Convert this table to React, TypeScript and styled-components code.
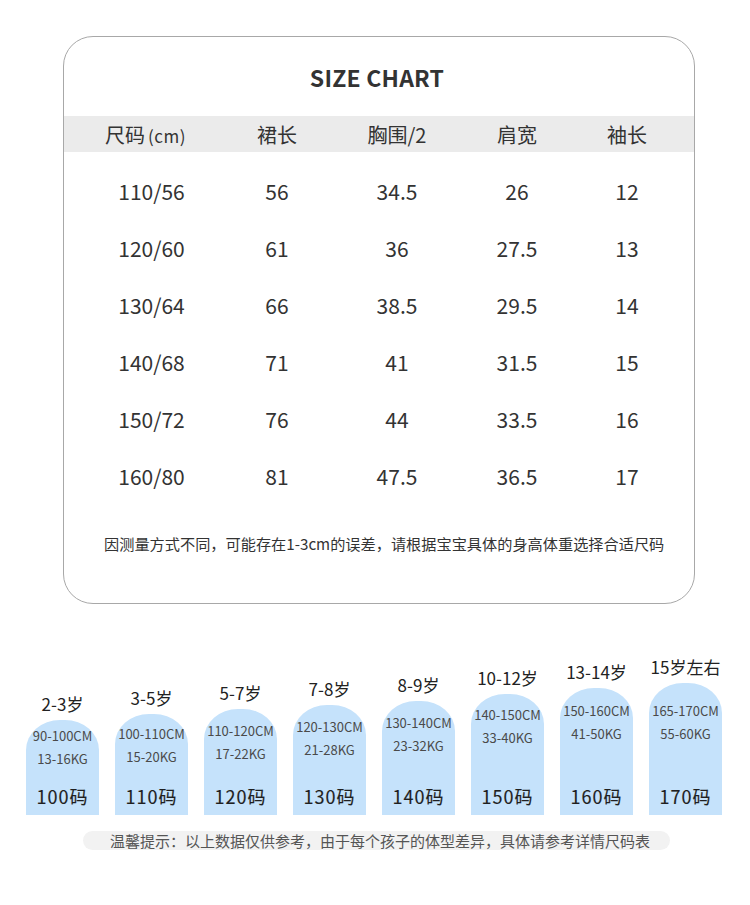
import React from "react";
import styled, { createGlobalStyle } from "styled-components";

const Global = createGlobalStyle`
  html, body { margin: 0; padding: 0; background: #ffffff; }
  body { font-family: "Noto Sans CJK SC", "Noto Sans", sans-serif; color: #333; }
`;

const Page = styled.div`
  width: 750px;
  height: 905px;
  overflow: hidden;
  display: flex;
  flex-direction: column;
`;

const Card = styled.section`
  box-sizing: border-box;
  margin: 36px 0 0 63px;
  width: 632px;
  height: 568px;
  border: 1px solid #a8a8a8;
  border-radius: 30px;
  display: flex;
  flex-direction: column;
`;

const Title = styled.h1`
  margin: 0;
  padding: 24px 4px 0 0;
  height: 54px;
  box-sizing: border-box;
  text-align: center;
  font-size: 23px;
  line-height: 32px;
  font-weight: 700;
  color: #333;
  letter-spacing: 0.2px;
`;

const Table = styled.div`
  margin-top: 25px;
  display: flex;
  flex-direction: column;
`;

const Row = styled.div<{ $head?: boolean }>`
  display: grid;
  grid-template-columns: 163px 100px 140px 100px 120px;
  align-items: center;
  height: ${(p) => (p.$head ? "36px" : "57px")};
  background: ${(p) => (p.$head ? "#ebebeb" : "transparent")};
  font-size: ${(p) => (p.$head ? "20px" : "21px")};
  color: #333;
`;

const Body = styled.div`
  padding-top: 10px;
`;

const Cell = styled.div<{ $shift?: number }>`
  text-align: center;
  padding-left: ${(p) => (p.$shift ?? 0) * 2}px;
  white-space: nowrap;
`;

const Unit = styled.span`
  font-size: 17px;
  margin-left: 3px;
  letter-spacing: 0.5px;
`;

const Note = styled.p`
  margin: 28px 0 0 0;
  padding-left: 40px;
  font-size: 15.2px;
  line-height: 22px;
  color: #333;
  white-space: nowrap;
`;

const Bars = styled.div`
  margin-top: 53px;
  padding-left: 26px;
  display: flex;
  align-items: flex-end;
  gap: 16px;
`;

const Column = styled.div`
  width: 73px;
  display: flex;
  flex-direction: column;
  align-items: center;
`;

const Age = styled.div`
  font-size: 17px;
  line-height: 20px;
  color: #222;
  margin-bottom: 6px;
  white-space: nowrap;
`;

const Bar = styled.div<{ $h: number; $pad: number }>`
  box-sizing: border-box;
  width: 73px;
  height: ${(p) => p.$h}px;
  background: #c5e2fb;
  border-radius: 34px 34px 0 0 / 30px 30px 0 0;
  display: flex;
  flex-direction: column;
  align-items: center;
  padding: ${(p) => p.$pad}px 0 0;
`;

const Specs = styled.div`
  font-size: 13px;
  line-height: 23px;
  color: #4a4a4a;
  text-align: center;
  white-space: nowrap;
`;

const SizeLabel = styled.div`
  margin-top: auto;
  margin-bottom: 7px;
  font-size: 18px;
  line-height: 24px;
  font-weight: 400;
  color: #1f1f1f;
  letter-spacing: 1px;
  -webkit-text-stroke: 0.15px #1f1f1f;
`;

const Tip = styled.div`
  margin: 16px 0 0 83px;
  width: 587px;
  height: 19px;
  box-sizing: border-box;
  padding-left: 27px;
  border-radius: 10px;
  background: #f2f2f2;
  font-size: 15px;
  line-height: 19px;
  color: #555;
  white-space: nowrap;
`;

const rows = [
  ["110/56", "56", "34.5", "26", "12"],
  ["120/60", "61", "36", "27.5", "13"],
  ["130/64", "66", "38.5", "29.5", "14"],
  ["140/68", "71", "41", "31.5", "15"],
  ["150/72", "76", "44", "33.5", "16"],
  ["160/80", "81", "47.5", "36.5", "17"],
];

const bars = [
  { age: "2-3岁", cm: "90-100CM", kg: "13-16KG", size: "100码", h: 95, pad: 4 },
  { age: "3-5岁", cm: "100-110CM", kg: "15-20KG", size: "110码", h: 101, pad: 8 },
  { age: "5-7岁", cm: "110-120CM", kg: "17-22KG", size: "120码", h: 106, pad: 10 },
  { age: "7-8岁", cm: "120-130CM", kg: "21-28KG", size: "130码", h: 110, pad: 10 },
  { age: "8-9岁", cm: "130-140CM", kg: "23-32KG", size: "140码", h: 114, pad: 10 },
  { age: "10-12岁", cm: "140-150CM", kg: "33-40KG", size: "150码", h: 121, pad: 9 },
  { age: "13-14岁", cm: "150-160CM", kg: "41-50KG", size: "160码", h: 127, pad: 11 },
  { age: "15岁左右", cm: "165-170CM", kg: "55-60KG", size: "170码", h: 132, pad: 16 },
];

export default function App() {
  return (
    <Page>
      <Global />
      <Card>
        <Title>SIZE CHART</Title>
        <Table>
          <Row $head>
            <Cell>
              尺码<Unit>(cm)</Unit>
            </Cell>
            <Cell>裙长</Cell>
            <Cell>胸围/2</Cell>
            <Cell>肩宽</Cell>
            <Cell>袖长</Cell>
          </Row>
          <Body>
            {rows.map((r) => (
              <Row key={r[0]}>
                {r.map((v, i) => (
                  <Cell key={i} $shift={i === 0 ? 6 : 0}>
                    {v}
                  </Cell>
                ))}
              </Row>
            ))}
          </Body>
        </Table>
        <Note>因测量方式不同，可能存在1-3cm的误差，请根据宝宝具体的身高体重选择合适尺码</Note>
      </Card>
      <Bars>
        {bars.map((b) => (
          <Column key={b.size}>
            <Age>{b.age}</Age>
            <Bar $h={b.h} $pad={b.pad}>
              <Specs>
                {b.cm}
                <br />
                {b.kg}
              </Specs>
              <SizeLabel>{b.size}</SizeLabel>
            </Bar>
          </Column>
        ))}
      </Bars>
      <Tip>温馨提示：以上数据仅供参考，由于每个孩子的体型差异，具体请参考详情尺码表</Tip>
    </Page>
  );
}
